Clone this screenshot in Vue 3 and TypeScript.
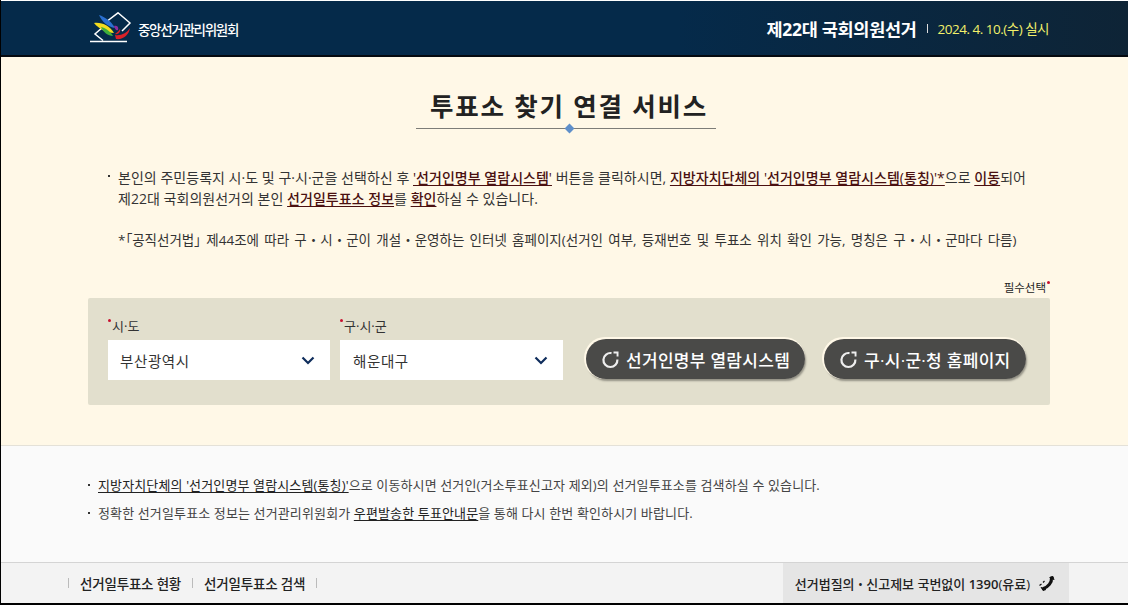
<script setup lang="ts">
interface Field { label: string; value: string; cls: string }
const fields: Field[] = [
  { label: '시·도', value: '부산광역시', cls: 'f1' },
  { label: '구·시·군', value: '해운대구', cls: 'f2' },
]
const buttons = [
  { text: '선거인명부 열람시스템', cls: 'b1' },
  { text: '구·시·군·청 홈페이지', cls: 'b2' },
]
</script>

<template>
  <div class="frame">
    <header class="top">
      <div class="logo">
        <svg class="mark" width="42" height="32" viewBox="0 0 42 32">
          <path d="M16 10 L28 0.8 L40 11 L32 19" fill="none" stroke="#fff" stroke-width="1.5" />
          <path d="M13 15 L5 22 L13 28.5" fill="none" stroke="#fff" stroke-width="1.5" />
          <path d="M0 29.5 H37" stroke="#fff" stroke-width="1.5" />
          <path d="M9 3 C15 5 21 9 25 16 C18 15 12 10 9 3Z" fill="#2a6fd0" />
          <path d="M4 11 C12 10 20 14 24 21 C16 21 9 17 4 11Z" fill="#f3dc1e" />
          <path d="M11 15 C16 16 21 20 23 24 C18 24 13 20 11 15Z" fill="#3fae3c" />
          <path d="M25 23 C31 24 37 21 40 16 C39 23 33 28 26 27Z" fill="#d92128" />
          <path d="M24 14 C27 13 29 15 28 18 C26 19 25 17 24 14Z" fill="#8f2c9c" />
          <path d="M25 22 C28 20 29 18 30 17 C31 20 28 23 25 22Z" fill="#d92128" />
        </svg>
        <span class="org">중앙선거관리위원회</span>
      </div>
      <div class="election">
        <strong>제22대 국회의원선거</strong>
        <i class="bar"></i>
        <span class="date">2024. 4. 10.(수) 실시</span>
      </div>
    </header>

    <main class="cream">
      <div class="title-wrap">
        <h1>투표소 찾기 연결 서비스</h1>
        <div class="rule"><i></i></div>
      </div>

      <div class="intro">
        <p class="lead">
          본인의 주민등록지 시·도 및 구·시·군을 선택하신 후 <b>'선거인명부 열람시스템'</b> 버튼을 클릭하시면, <b>지방자치단체의 '선거인명부 열람시스템(통칭)'*</b>으로 <b>이동</b>되어<br />
          제22대 국회의원선거의 본인 <b>선거일투표소 정보</b>를 <b>확인</b>하실 수 있습니다.
        </p>
        <p class="note">*<span class="br">「</span>공직선거법<span class="br">」</span> 제44조에 따라 구・시・군이 개설・운영하는 인터넷 홈페이지(선거인 여부, 등재번호 및 투표소 위치 확인 가능, 명칭은 구・시・군마다 다름)</p>
      </div>

      <div class="req">필수선택<i class="dot"></i></div>
      <section class="panel">
        <div v-for="f in fields" :key="f.label" class="field" :class="f.cls">
          <label><i class="dot"></i>{{ f.label }}</label>
          <div class="select">
            <span>{{ f.value }}</span>
            <svg width="14" height="9" viewBox="0 0 14 9"><path d="M1.5 1.5 L7 7 L12.5 1.5" fill="none" stroke="#0f2d5c" stroke-width="2.2" /></svg>
          </div>
        </div>
        <button v-for="b in buttons" :key="b.text" type="button" class="btn" :class="b.cls">
          <svg width="19" height="19" viewBox="0 0 19 19">
            <path d="M10.5 3.1 A7 7 0 1 0 16.4 9.5" fill="none" stroke="#eee" stroke-width="2.2" />
            <path d="M12.5 1.5 H17.5 V6.5 H15.6 V3.4 H12.5 Z" fill="#eee" />
          </svg>
          <span>{{ b.text }}</span>
        </button>
      </section>
    </main>

    <section class="notes">
      <ul>
        <li><u>지방자치단체의 '선거인명부 열람시스템(통칭)'</u>으로 이동하시면 선거인(거소투표신고자 제외)의 선거일투표소를 검색하실 수 있습니다.</li>
        <li>정확한 선거일투표소 정보는 선거관리위원회가 <u>우편발송한 투표안내문</u>을 통해 다시 한번 확인하시기 바랍니다.</li>
      </ul>
    </section>

    <footer class="foot">
      <nav>
        <i></i><a>선거일투표소 현황</a><i></i><a>선거일투표소 검색</a><i></i>
      </nav>
      <div class="call">
        <span>선거법질의 • 신고제보 국번없이 <b class="num">1390</b>(유료)</span>
        <svg width="18" height="17" viewBox="0 0 18 17">
          <path d="M13.5 3 C14 7.5 10 12 5.5 13.5" fill="none" stroke="#111" stroke-width="3.2" stroke-linecap="round" />
          <path d="M11.5 2.5 L15 1.5 L16 5 M3 12 L5 15.5 L8 14.5" fill="#111" stroke="#111" stroke-width="1" />
          <path d="M1.5 10.5 L3.5 9 M5 7.5 L6.5 6" stroke="#111" stroke-width="1.2" />
        </svg>
      </div>
    </footer>
  </div>
</template>

<style>
html, body { margin: 0; background: #000; }
</style>

<style scoped>
.frame {
  width: 1127px;
  height: 603px;
  margin-left: 1px;
  display: flex;
  flex-direction: column;
  overflow: hidden;
  background: #fff;
  font-family: "Open Sans", "Noto Sans CJK KR", sans-serif;
  color: #333;
}
.top {
  box-sizing: border-box;
  height: 56px;
  flex: none;
  margin-top: 1px;
  padding: 11px 79px 0 89px;
  display: flex;
  justify-content: space-between;
  background: linear-gradient(90deg, #052a4a 0%, #052a4a 60%, #0e2436 100%);
  border-bottom: 2px solid #050a10;
}
.logo { display: flex; align-items: flex-start; gap: 6px; height: 32px; }
.org { color: #fff; font-size: 13.5px; font-weight: 500; letter-spacing: -1.3px; line-height: 36px; }
.election { display: flex; align-items: center; height: 32px; color: #fff; }
.election strong { font-size: 17.5px; font-weight: 700; letter-spacing: -0.3px; }
.bar { width: 1px; height: 9px; background: #ddd; margin: 0 10px; }
.date { color: #f2f06a; font-size: 13.5px; letter-spacing: -0.5px; }

.cream {
  box-sizing: border-box;
  height: 389px;
  flex: none;
  background: #fff8e7;
  border-bottom: 1px solid #e4e1d8;
  padding: 0 78px 0 87px;
}
.title-wrap { width: 300px; margin: 0 auto; padding-top: 30px; transform: translateX(-3px); }
h1 {
  margin: 0;
  padding-left: 6px;
  text-align: center;
  font-size: 25.5px;
  line-height: 39px;
  font-weight: 700;
  letter-spacing: 1.8px;
  white-space: nowrap;
  color: #222;
}
.rule { position: relative; height: 1px; margin-top: 2px; background: #7d7d78; }
.rule i {
  position: absolute;
  left: 150px;
  top: -3px;
  width: 7px;
  height: 7px;
  background: #5f8fca;
  transform: rotate(45deg);
}
.intro { margin-top: 38px; padding-left: 30px; font-size: 14px; color: #333; }
.lead { position: relative; margin: 0; line-height: 21px; letter-spacing: 0.03px; white-space: nowrap; }
.lead::before {
  content: "";
  position: absolute;
  left: -10px;
  top: 8px;
  width: 2px;
  height: 2px;
  background: #333;
}
.lead b { font-weight: 500; color: #4a1010; text-decoration: underline; text-underline-offset: 2px; }
.note { margin: 18px 0 0; font-size: 13.5px; line-height: 26px; word-spacing: 1.75px; white-space: nowrap; }
.br { font-feature-settings: "palt"; }
.req {
  margin-top: 25px;
  height: 20px;
  text-align: right;
  font-size: 11.5px;
  line-height: 20px;
  color: #222;
}
.req .dot { margin-left: 1px; vertical-align: 8px; }
.dot {
  display: inline-block;
  width: 3px;
  height: 3px;
  border-radius: 50%;
  background: #c8102e;
}
.panel {
  box-sizing: border-box;
  height: 107px;
  padding: 0 20px;
  display: flex;
  align-items: flex-start;
  background: #e2dfcd;
  border-radius: 2px;
}
.field { width: 222px; margin-right: 10px; padding-top: 18px; }
.field.f2 { margin-right: 22px; width: 223px; }
label {
  display: block;
  height: 24px;
  font-size: 13px;
  line-height: 20px;
  color: #333;
}
label .dot { vertical-align: 9px; margin-right: 1px; }
.select {
  box-sizing: border-box;
  height: 40px;
  padding: 0 15px 0 12px;
  display: flex;
  align-items: center;
  justify-content: space-between;
  background: #fff;
  font-size: 14.5px;
  letter-spacing: 0.6px;
  color: #333;
}
.f2 .select { padding-left: 13px; }
.btn {
  box-sizing: border-box;
  height: 40px;
  margin-top: 41px;
  padding: 0 0 0 15px;
  display: flex;
  align-items: center;
  gap: 6px;
  border: 0;
  border-radius: 20px;
  background: #4a4a48;
  box-shadow: -1px -1px 0 1px #fff8e7, 1px 2px 2px rgba(0, 0, 0, .35);
  color: #fff;
  font: 500 17px "Open Sans", "Noto Sans CJK KR", sans-serif;
  letter-spacing: 0.3px;
  white-space: nowrap;
}
.btn.b1 { width: 219px; margin-left: 1px; }
.btn.b2 { width: 202px; margin-left: 19px; }

.notes {
  box-sizing: border-box;
  height: 117px;
  flex: none;
  background: #fafafa;
  border-bottom: 1px solid #d4d4d4;
  padding: 25px 0 0 87px;
}
ul { margin: 0; padding: 0; list-style: none; font-size: 13px; line-height: 28px; letter-spacing: 0.13px; color: #444; }
li { position: relative; padding-left: 10px; white-space: nowrap; }
li::before {
  content: "";
  position: absolute;
  left: 0;
  top: 13px;
  width: 2px;
  height: 2px;
  background: #333;
}
u { text-underline-offset: 2px; color: #222; }

.foot {
  flex: 1;
  display: flex;
  justify-content: space-between;
  padding: 0 59px 0 67px;
  background: #f3f3f3;
}
nav { display: flex; align-items: center; gap: 11px; font-size: 13.5px; letter-spacing: -0.2px; font-weight: 500; color: #222; }
nav i { width: 1px; height: 10px; background: #bbb; }
.call {
  display: flex;
  align-items: center;
  gap: 8px;
  padding: 0 13px 0 12px;
  background: #e5e5e5;
  font-size: 13px;
  font-weight: 500;
  color: #222;
}
.num { font-weight: 600; }
</style>
